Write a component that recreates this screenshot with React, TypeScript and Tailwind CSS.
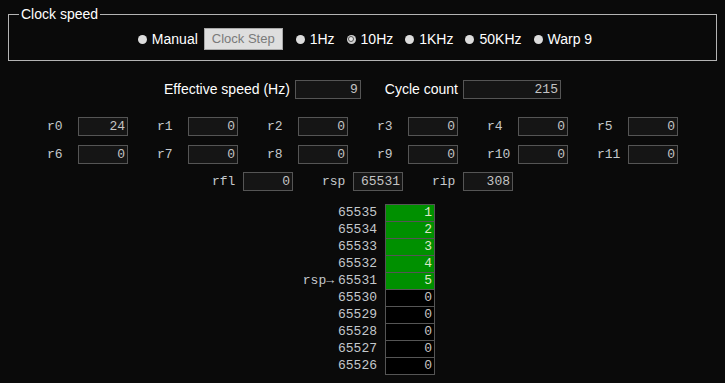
const mono = "font-['Liberation_Mono','DejaVu_Sans_Mono',monospace]";

interface RadioProps {
  label: string;
  checked?: boolean;
}

function Radio({ label, checked = false }: RadioProps) {
  return (
    <div className="flex items-center">
      {checked ? (
        <span className="flex h-[9px] w-[9px] items-center justify-center rounded-full bg-[#cfcfcf]">
          <span className="h-[6px] w-[6px] rounded-full border-[1.5px] border-[#555] bg-[#e8e8e8]" />
        </span>
      ) : (
        <span className="h-[9px] w-[9px] rounded-full bg-[#dcdcdc]" />
      )}
      <span className="ml-[5px]">{label}</span>
    </div>
  );
}

function Field({ value, w }: { value: number | string; w: string }) {
  return (
    <div
      className={`${w} ${mono} h-[19px] border border-[#555] bg-[#151515] pr-[2px] text-right text-[13px] leading-[17px] text-[#c4c4c4]`}
    >
      {value}
    </div>
  );
}

function Reg({ name, value }: { name: string; value: number }) {
  return (
    <div className="flex w-[81px] items-center">
      <span className={`${mono} w-[31px] text-[13px] text-[#c4c8cc]`}>{name}</span>
      <Field value={value} w="w-[50px]" />
    </div>
  );
}

const stack = [
  { addr: 65535, value: 1, used: true },
  { addr: 65534, value: 2, used: true },
  { addr: 65533, value: 3, used: true },
  { addr: 65532, value: 4, used: true },
  { addr: 65531, value: 5, used: true, ptr: "rsp→" },
  { addr: 65530, value: 0 },
  { addr: 65529, value: 0 },
  { addr: 65528, value: 0 },
  { addr: 65527, value: 0 },
  { addr: 65526, value: 0 },
];

export default function App() {
  const rows = [
    ["r0", 24], ["r1", 0], ["r2", 0], ["r3", 0], ["r4", 0], ["r5", 0],
  ] as const;
  const rows2 = [
    ["r6", 0], ["r7", 0], ["r8", 0], ["r9", 0], ["r10", 0], ["r11", 0],
  ] as const;

  return (
    <div className="min-h-screen bg-[#0a0a0a] px-[8px] pt-[6px] font-['Liberation_Sans',Arial,sans-serif] text-[14px] text-white">
      <fieldset className="border border-[#b4b4b4] px-[10px] pt-[6px] pb-[10px]">
        <legend className="px-[2px] leading-[16px]">Clock speed</legend>
        <div className="flex h-[22px] items-center justify-center pl-[5px]">
          <Radio label="Manual" />
          <button className="ml-[6px] h-[22px] border border-[#a8a8a8] bg-[#dedede] px-[7px] text-[13px] text-[#7a7a7a]">
            Clock Step
          </button>
          <div className="ml-[13px] flex items-center gap-[12px]">
            <Radio label="1Hz" />
            <Radio label="10Hz" checked />
            <Radio label="1KHz" />
            <Radio label="50KHz" />
            <Radio label="Warp 9" />
          </div>
        </div>
      </fieldset>

      <div className="mt-[18px] flex items-center justify-center">
        <span>Effective speed (Hz)</span>
        <div className="ml-[5px]">
          <Field value={9} w="w-[66px]" />
        </div>
        <span className="ml-[24px]">Cycle count</span>
        <div className="ml-[5px]">
          <Field value={215} w="w-[98px]" />
        </div>
      </div>

      <div className="mt-[17px] flex flex-col items-center gap-[8px]">
        <div className="flex gap-x-[29px]">
          {rows.map(([n, v]) => (
            <Reg key={n} name={n} value={v} />
          ))}
        </div>
        <div className="flex gap-x-[29px]">
          {rows2.map(([n, v]) => (
            <Reg key={n} name={n} value={v} />
          ))}
        </div>
        <div className="flex gap-x-[29px]">
          <Reg name="rfl" value={0} />
          <Reg name="rsp" value={65531} />
          <Reg name="rip" value={308} />
        </div>
      </div>

      <div className={`${mono} mt-[12px] flex flex-col items-center text-[13px] leading-[16px]`}>
        {stack.map((s, i) => (
          <div key={s.addr} className={`flex items-center ${i > 0 ? "-mt-px" : ""}`}>
            <span className="w-[44px] text-right text-[#c4c8cc]">{s.ptr ?? ""}</span>
            <span className="ml-[4px] w-[39px] text-right text-[#c4c8cc]">{s.addr}</span>
            <div
              className={`ml-[8px] h-[18px] w-[50px] border border-[#555] pr-[2px] text-right ${
                s.used ? "bg-[#009000] text-[#dde8c8]" : "bg-black text-[#c8c4c0]"
              }`}
            >
              {s.value}
            </div>
          </div>
        ))}
      </div>
    </div>
  );
}
